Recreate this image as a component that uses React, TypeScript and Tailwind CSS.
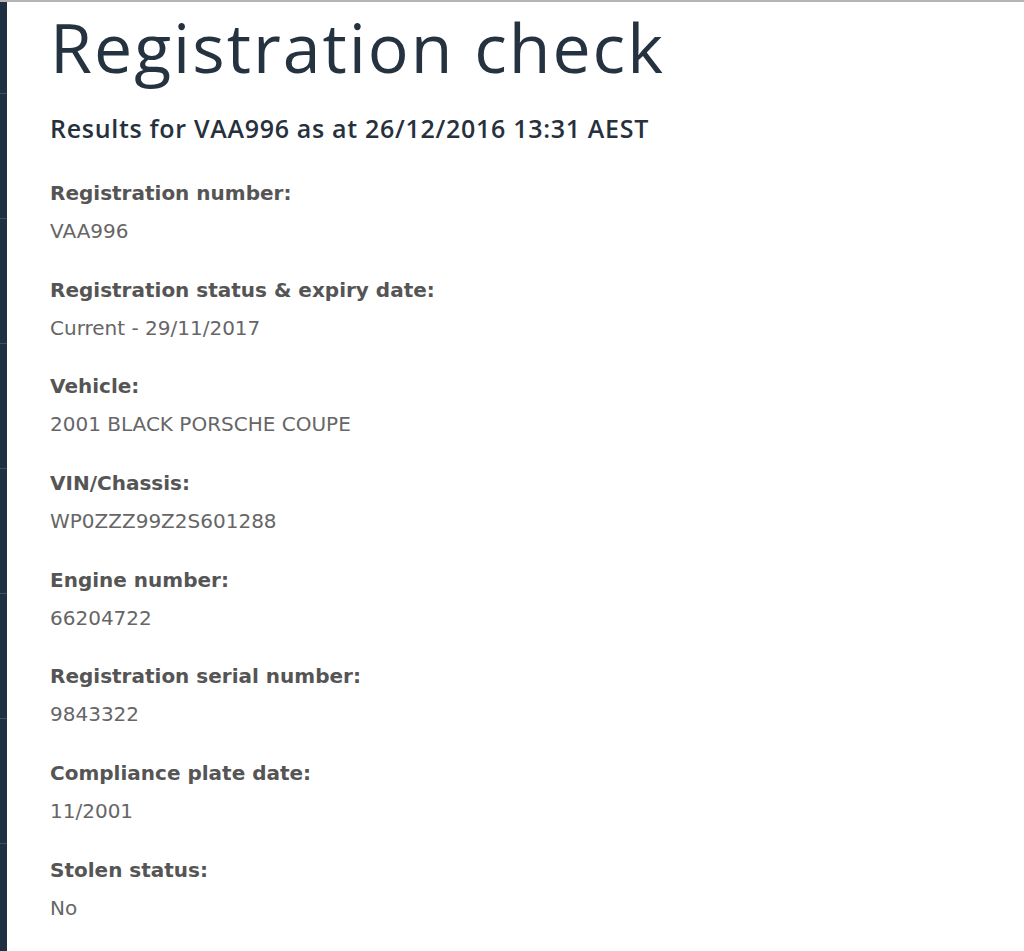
export default function App() {
  const rows: [string, string][] = [
    ["Registration number:", "VAA996"],
    ["Registration status & expiry date:", "Current - 29/11/2017"],
    ["Vehicle:", "2001 BLACK PORSCHE COUPE"],
    ["VIN/Chassis:", "WP0ZZZ99Z2S601288"],
    ["Engine number:", "66204722"],
    ["Registration serial number:", "9843322"],
    ["Compliance plate date:", "11/2001"],
    ["Stolen status:", "No"],
  ];

  return (
    <div className="flex h-[951px] w-[1024px] border-t-2 border-[#b4b4b4] bg-white">
      {/* side rail */}
      <div className="flex w-[7px] shrink-0 flex-col bg-[#1e3041] pt-[91px]">
        {Array.from({ length: 7 }).map((_, i) => (
          <div key={i} className="h-[125px] shrink-0 border-t border-[#3e5064]" />
        ))}
      </div>

      <main className="flex-1 pl-[43px]">
        <h1 className="-mt-[2px] font-['Open_Sans',sans-serif] text-[68px] leading-[93px] tracking-[2px] text-[#25323f]">
          Registration check
        </h1>
        <h2 className="mt-[19px] font-['Open_Sans',sans-serif] text-[25px] font-semibold leading-[32px] tracking-[0.7px] text-[#26313d]">
          Results for VAA996 as at 26/12/2016 13:31 AEST
        </h2>

        <div className="mt-[37px] font-['DejaVu_Sans',Verdana,sans-serif]">
          {rows.map(([label, value]) => (
            <div key={label} className="h-[96.7px]">
              <div className="text-[20px] font-bold leading-[24px] text-[#555555]">{label}</div>
              <div className="mt-[14px] text-[20px] leading-[24px] text-[#666666]">{value}</div>
            </div>
          ))}
        </div>
      </main>
    </div>
  );
}
